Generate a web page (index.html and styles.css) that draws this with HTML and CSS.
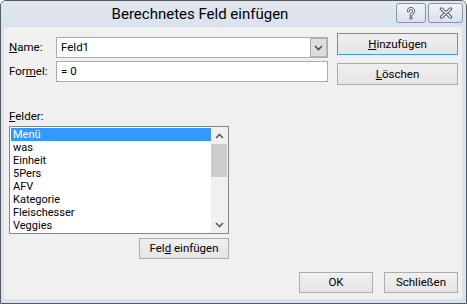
FILE: index.html
```html
<!DOCTYPE html>
<html lang="de">
<head>
<meta charset="utf-8">
<title>Berechnetes Feld einfügen</title>
<link rel="stylesheet" href="styles.css">
</head>
<body>
<div class="window">
  <div class="titlebar">
    <div class="title">Berechnetes Feld einfügen</div>
    <div class="caption">
      <div class="cbtn help">
        <svg width="10" height="13" viewBox="0 0 10 13">
          <path d="M2.4 4 A2.6 2.6 0 1 1 6.4 6.2 C5.5 6.7 5 7.2 5 8.3" fill="none" stroke="#56616f" stroke-width="3" stroke-linecap="round"/>
          <circle cx="5" cy="11" r="1.6" fill="#56616f"/>
          <path d="M2.4 4 A2.6 2.6 0 1 1 6.4 6.2 C5.5 6.7 5 7.2 5 8.3" fill="none" stroke="#ffffff" stroke-width="1.1" stroke-linecap="round"/>
          <circle cx="5" cy="11" r="0.6" fill="#ffffff"/>
        </svg>
      </div>
      <div class="cbtn close">
        <svg width="14" height="12" viewBox="0 0 14 12">
          <path d="M2.5 2 L11.5 10 M11.5 2 L2.5 10" fill="none" stroke="#56616f" stroke-width="3.4" stroke-linecap="round"/>
          <path d="M2.5 2 L11.5 10 M11.5 2 L2.5 10" fill="none" stroke="#ffffff" stroke-width="1.3" stroke-linecap="round"/>
        </svg>
      </div>
    </div>
  </div>
  <div class="client">
    <div class="top">
      <div class="fields">
        <div class="row">
          <div class="label"><u>N</u>ame:</div>
          <div class="combo">
            <span class="value">Feld1</span>
            <div class="drop">
              <svg width="9" height="6" viewBox="0 0 9 6"><path d="M1 1 L4.5 4.5 L8 1" fill="none" stroke="#505050" stroke-width="1.7"/></svg>
            </div>
          </div>
        </div>
        <div class="row">
          <div class="label">For<u>m</u>el:</div>
          <div class="textbox"><span class="value">= 0</span></div>
        </div>
      </div>
      <div class="side">
        <div class="btn wide default"><span><u>H</u>inzufügen</span></div>
        <div class="btn wide"><span><u>L</u>öschen</span></div>
      </div>
    </div>
    <div class="felder-label"><u>F</u>elder:</div>
    <div class="listbox">
      <div class="items">
        <div class="item selected">Menü</div>
        <div class="item">was</div>
        <div class="item">Einheit</div>
        <div class="item">5Pers</div>
        <div class="item">AFV</div>
        <div class="item">Kategorie</div>
        <div class="item">Fleischesser</div>
        <div class="item">Veggies</div>
      </div>
      <div class="scrollbar">
        <div class="arrow">
          <svg width="9" height="6" viewBox="0 0 9 6"><path d="M1 5 L4.5 1.5 L8 5" fill="none" stroke="#606060" stroke-width="1.7"/></svg>
        </div>
        <div class="thumb"></div>
        <div class="track"></div>
        <div class="arrow">
          <svg width="9" height="6" viewBox="0 0 9 6"><path d="M1 1 L4.5 4.5 L8 1" fill="none" stroke="#606060" stroke-width="1.7"/></svg>
        </div>
      </div>
    </div>
    <div class="insert-row">
      <div class="btn insert"><span>Fel<u>d</u> einfügen</span></div>
    </div>
    <div class="footer">
      <div class="btn small"><span>OK</span></div>
      <div class="btn small"><span>Schließen</span></div>
    </div>
  </div>
</div>
</body>
</html>
```
FILE: styles.css
```css
html, body {
  margin: 0;
  padding: 0;
  background: #ffffff;
}

body {
  font-family: Roboto, "Noto Sans", sans-serif;
  font-size: 11.5px;
  color: #000000;
}

u {
  text-decoration: underline;
  text-underline-offset: 1px;
}

.window {
  width: 467px;
  height: 304px;
  box-sizing: border-box;
  border: 1px solid #555a61;
  border-radius: 6px 6px 0 0;
  background: #d9e3ee;
  display: flex;
  flex-direction: column;
  overflow: hidden;
}

.titlebar {
  height: 26px;
  flex: none;
  display: flex;
  align-items: flex-start;
  background: linear-gradient(#e2e7ed, #d8e2ee);
}

.title {
  flex: 1;
  text-align: center;
  font-size: 15px;
  line-height: 26px;
  padding-left: 3px;
}

.caption {
  display: flex;
  gap: 2px;
  margin-top: 2px;
  margin-right: 3px;
}

.cbtn {
  height: 20px;
  box-sizing: border-box;
  border: 1px solid #8a97a8;
  border-radius: 3px;
  background: linear-gradient(#f1f4f8, #d9e1eb);
  display: flex;
  align-items: center;
  justify-content: center;
}

.cbtn.help {
  width: 30px;
}

.cbtn.close {
  width: 35px;
}

.client {
  flex: 1;
  margin: 0 4px 4px 3px;
  background: #f0f0f0;
  display: flex;
  flex-direction: column;
  padding: 6px 4px 6px 5px;
}

.top {
  display: flex;
  align-items: flex-start;
  height: 52px;
}

.fields {
  width: 319px;
  margin-top: 4px;
  display: flex;
  flex-direction: column;
  gap: 3px;
}

.row {
  display: flex;
  align-items: center;
  height: 21px;
}

.label {
  width: 47px;
  line-height: 15px;
}

.combo,
.textbox {
  width: 272px;
  height: 21px;
  box-sizing: border-box;
  border: 1px solid #abadb3;
  background: #ffffff;
  display: flex;
  align-items: center;
}

.value {
  flex: 1;
  padding-left: 4px;
  line-height: 15px;
}

.drop {
  width: 17px;
  height: 19px;
  box-sizing: border-box;
  border: 1px solid #b4b4b4;
  background: #dedede;
  display: flex;
  align-items: center;
  justify-content: center;
}

.side {
  margin-left: 9px;
  display: flex;
  flex-direction: column;
  gap: 8px;
}

.btn {
  box-sizing: border-box;
  height: 21px;
  border: 1px solid #adadad;
  background: linear-gradient(#f0f0f0, #e5e5e5);
  display: flex;
  align-items: center;
  justify-content: center;
  line-height: 15px;
}

.btn.wide {
  width: 121px;
  height: 22px;
}

.btn.default {
  border-color: #3c9bf0;
}

.felder-label {
  margin-top: 24px;
  line-height: 15px;
}

.listbox {
  margin-top: 2px;
  width: 220px;
  height: 108px;
  box-sizing: border-box;
  border: 1px solid #82878f;
  background: #ffffff;
  display: flex;
}

.items {
  flex: 1;
  padding: 1px 0 1px 1px;
}

.item {
  height: 13px;
  line-height: 13px;
  font-size: 11px;
  padding-left: 2px;
  white-space: nowrap;
}

.item.selected {
  background: #3399ff;
  color: #ffffff;
}

.scrollbar {
  width: 17px;
  background: #f0f0f0;
  display: flex;
  flex-direction: column;
}

.arrow {
  height: 17px;
  display: flex;
  align-items: center;
  justify-content: center;
}

.thumb {
  height: 33px;
  margin-right: 1px;
  background: #cdcdcd;
}

.track {
  flex: 1;
}

.insert-row {
  width: 220px;
  margin-top: 4px;
  display: flex;
  justify-content: flex-end;
}

.btn.insert {
  width: 90px;
}

.footer {
  margin-top: 13px;
  display: flex;
  justify-content: flex-end;
  gap: 11px;
}

.btn.small {
  width: 74px;
}
```
